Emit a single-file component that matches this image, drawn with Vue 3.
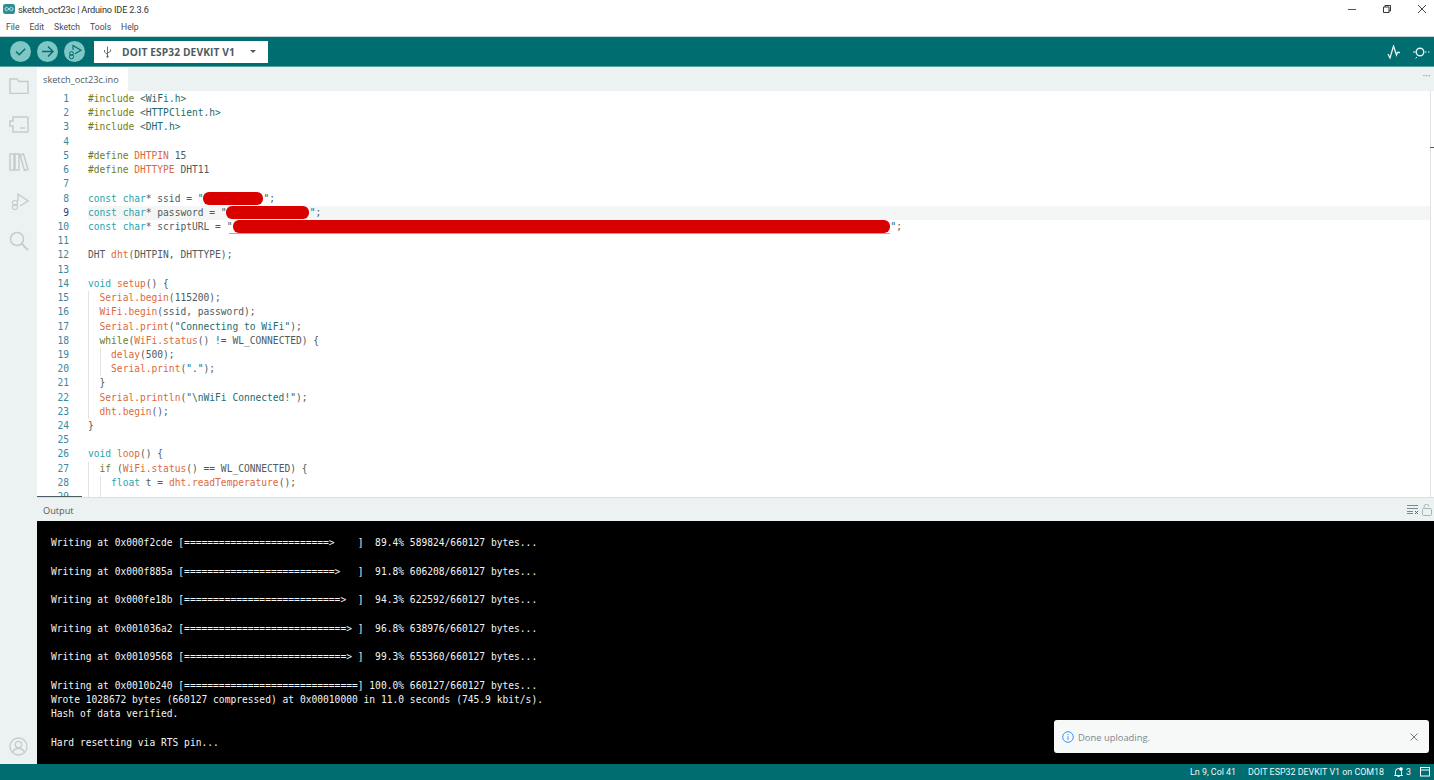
<script setup>
const k = 'kw', p = 'pp', s = 'str', f = 'fn', t = 'tx'
const code = [
  [0, [p, '#include'], [t, ' '], [s, '<WiFi.h>']],
  [0, [p, '#include'], [t, ' '], [s, '<HTTPClient.h>']],
  [0, [p, '#include'], [t, ' '], [s, '<DHT.h>']],
  [0],
  [0, [p, '#define'], [t, ' '], [f, 'DHTPIN'], [t, ' 15']],
  [0, [p, '#define'], [t, ' '], [f, 'DHTTYPE'], [t, ' DHT11']],
  [0],
  [0, [k, 'const char'], [t, '* ssid = '], [s, '"'], ['red r1', ''], [s, '"'], [t, ';']],
  [0, [k, 'const char'], [t, '* password = '], [s, '"'], ['red r2', ''], [s, '"'], [t, ';']],
  [0, [k, 'const char'], [t, '* scriptURL = '], [s, '"'], ['red r3', ''], [s, '"'], [t, ';']],
  [0],
  [0, [t, 'DHT '], [f, 'dht'], [t, '(DHTPIN, DHTTYPE);']],
  [0],
  [0, [k, 'void'], [t, ' '], [f, 'setup'], [t, '() {']],
  [1, [f, 'Serial.begin'], [t, '(115200);']],
  [1, [f, 'WiFi.begin'], [t, '(ssid, password);']],
  [1, [f, 'Serial.print'], [t, '('], [s, '"Connecting to WiFi"'], [t, ');']],
  [1, [p, 'while'], [t, '('], [f, 'WiFi.status'], [t, '() != WL_CONNECTED) {']],
  [2, [f, 'delay'], [t, '(500);']],
  [2, [f, 'Serial.print'], [t, '('], [s, '"."'], [t, ');']],
  [1, [t, '}']],
  [1, [f, 'Serial.println'], [t, '('], [s, '"\\nWiFi Connected!"'], [t, ');']],
  [1, [f, 'dht.begin'], [t, '();']],
  [0, [t, '}']],
  [0],
  [0, [k, 'void'], [t, ' '], [f, 'loop'], [t, '() {']],
  [1, [p, 'if'], [t, ' ('], [f, 'WiFi.status'], [t, '() == WL_CONNECTED) {']],
  [2, [k, 'float'], [t, ' t = '], [f, 'dht.readTemperature'], [t, '();']],
  [2],
]
const lines = code.map((row, i) => ({ no: i + 1, indent: row[0], parts: row.slice(1) }))
const output = [
  'Writing at 0x000f2cde [=========================>    ]  89.4% 589824/660127 bytes... ',
  '',
  'Writing at 0x000f885a [==========================>   ]  91.8% 606208/660127 bytes... ',
  '',
  'Writing at 0x000fe18b [===========================>  ]  94.3% 622592/660127 bytes... ',
  '',
  'Writing at 0x001036a2 [============================> ]  96.8% 638976/660127 bytes... ',
  '',
  'Writing at 0x00109568 [============================> ]  99.3% 655360/660127 bytes... ',
  '',
  'Writing at 0x0010b240 [==============================] 100.0% 660127/660127 bytes... ',
  'Wrote 1028672 bytes (660127 compressed) at 0x00010000 in 11.0 seconds (745.9 kbit/s).',
  'Hash of data verified.',
  '',
  'Hard resetting via RTS pin...',
].join('\n')
const menus = ['File', 'Edit', 'Sketch', 'Tools', 'Help']
</script>

<template>
  <div class="app">
    <header class="titlebar">
      <div class="title">
        <svg class="logo" viewBox="0 0 12 10" width="12" height="10">
          <rect width="12" height="10" rx="2.2" fill="#2f8f96" />
          <path d="M3.6 3.4a1.6 1.6 0 1 0 0 3.2c1.7 0 3-3.2 4.8-3.2a1.6 1.6 0 1 1 0 3.2c-1.8 0-3.1-3.2-4.8-3.2z" fill="none" stroke="#d9f0f0" stroke-width=".8" />
        </svg>
        <span>sketch_oct23c | Arduino IDE 2.3.6</span>
      </div>
      <div class="winctrls">
        <svg width="10" height="10" viewBox="0 0 10 10"><path d="M1 5.5h8" stroke="#555" fill="none" /></svg>
        <svg width="10" height="10" viewBox="0 0 10 10"><path d="M1.5 3h5.5v5.5h-5.500zM3 3V1.500h5.500v5.500H7" stroke="#333" fill="none" /></svg>
        <svg width="10" height="10" viewBox="0 0 10 10"><path d="M1 1l8 8M9 1l-8 8" stroke="#444" fill="none" /></svg>
      </div>
    </header>
    <nav class="menubar">
      <span v-for="m in menus" :key="m">{{ m }}</span>
    </nav>
    <div class="toolbar">
      <div class="round">
        <svg width="21" height="21" viewBox="0 0 21 21"><path d="M6 10.500l3.200 3.200 6-6" fill="none" stroke="#006d70" stroke-width="1.500" /></svg>
      </div>
      <div class="round">
        <svg width="21" height="21" viewBox="0 0 21 21"><path d="M5 10.500h10.500M11 5.500l5 5-5 5" fill="none" stroke="#006d70" stroke-width="1.400" /></svg>
      </div>
      <div class="round">
        <svg width="21" height="21" viewBox="0 0 21 21"><path d="M9 9V4.500l8 4.800-6 3.500" fill="none" stroke="#006d70" stroke-width="1.100" /><circle cx="7.500" cy="12.500" r="1.900" fill="none" stroke="#006d70" /><circle cx="7.500" cy="15.700" r="2.100" fill="none" stroke="#006d70" /></svg>
      </div>
      <div class="board">
        <svg width="9" height="12" viewBox="0 0 9 12"><path d="M4.500 0.500V11.500M4.500 8.500L1.500 6V4M4.500 7L7.500 5.500V3.500" fill="none" stroke="#50606a" stroke-width=".9" /><circle cx="4.500" cy="10.500" r="1.100" fill="#50606a" /></svg>
        <b>DOIT ESP32 DEVKIT V1</b>
        <i class="caret"></i>
      </div>
      <div class="tool-right">
        <svg width="14" height="14" viewBox="0 0 14 14"><path d="M1 9l2 4 3.500-12 3 9 1-2.500h2.500" fill="none" stroke="#e6f2f2" stroke-width="1.300" /></svg>
        <svg width="18" height="14" viewBox="0 0 18 14"><circle cx="7" cy="7" r="3.800" fill="none" stroke="#e6f2f2" stroke-width="1.400" /><path d="M0 7h2.500M12 7h1.500M15 7h1.500M4 12l-1.500 1.500" fill="none" stroke="#e6f2f2" /></svg>
      </div>
    </div>
    <div class="body">
      <aside class="sidebar">
        <div class="side-top">
          <svg width="20" height="18" viewBox="0 0 20 18"><path d="M1 3h7l2 2.500h9v12H1z" fill="none" stroke="#c4cccc" stroke-width="1.500" /></svg>
          <svg width="20" height="18" viewBox="0 0 20 18"><path d="M4 2h14a1 1 0 0 1 1 1v13a1 1 0 0 1-1 1H4V11H1V6h3z" fill="none" stroke="#c4cccc" stroke-width="1.500" /><path d="M11 13h5" stroke="#c4cccc" stroke-width="1.500" /></svg>
          <svg width="20" height="18" viewBox="0 0 20 18"><path d="M1 1h4v16H1zM6 1h4v16H6zM11 2l3.500-1 4.500 15.500-3.500 1z" fill="none" stroke="#c4cccc" stroke-width="1.500" /></svg>
          <svg width="20" height="18" viewBox="0 0 20 18"><path d="M9 9V2l10 7-8 5" fill="none" stroke="#c4cccc" stroke-width="1.400" /><circle cx="6" cy="11" r="2.500" fill="none" stroke="#c4cccc" stroke-width="1.200" /><circle cx="6" cy="15" r="2.500" fill="none" stroke="#c4cccc" stroke-width="1.200" /></svg>
          <svg width="20" height="20" viewBox="0 0 20 20"><circle cx="8" cy="8" r="6.500" fill="none" stroke="#c4cccc" stroke-width="1.500" /><path d="M13 13l6 6" stroke="#c4cccc" stroke-width="1.800" /></svg>
        </div>
        <svg class="profile" width="19" height="19" viewBox="0 0 19 19"><circle cx="9.500" cy="9.500" r="8.500" fill="none" stroke="#c4cccc" stroke-width="1.300" /><circle cx="9.500" cy="7.500" r="3.200" fill="none" stroke="#c4cccc" stroke-width="1.300" /><path d="M3.500 15.500c1-3 3-4 6-4s5 1 6 4" fill="none" stroke="#c4cccc" stroke-width="1.300" /></svg>
      </aside>
      <main class="workspace">
        <div class="tabbar">
          <div class="tab">sketch_oct23c.ino</div>
          <div class="more">···</div>
        </div>
        <section class="editor">
          <div v-for="l in lines" :key="l.no" class="line" :class="{ current: l.no === 9 }">
            <span class="no">{{ l.no }}</span>
            <span class="content">
              <span v-for="g in l.indent" :key="g" class="indent"></span><span v-for="(pt, i) in l.parts" :key="i" :class="pt[0]">{{ pt[1] }}</span>
            </span>
          </div>
          <div class="ruler"><i></i></div>
        </section>
        <div class="outhead">
          <div class="outtab">Output</div>
          <div class="outicons">
            <svg width="11" height="9" viewBox="0 0 11 9"><path d="M0 .5h11M0 3.500h11M0 6.500h6M0 8.500h6" stroke="#7a8a90" fill="none" /><path d="M8 6l3 3M11 6l-3 3" stroke="#58666c" fill="none" /></svg>
            <svg width="10" height="12" viewBox="0 0 10 12"><rect x=".5" y="4.500" width="9" height="7" rx="1" fill="none" stroke="#a9b4b8" /><path d="M2 4.500V3a2.500 2.500 0 0 1 5-.500" fill="none" stroke="#a9b4b8" /></svg>
          </div>
        </div>
        <pre class="terminal">{{ output }}</pre>
      </main>
    </div>
    <footer class="statusbar">
      <span>Ln 9, Col 41</span>
      <span class="st-board">DOIT ESP32 DEVKIT V1 on COM18</span>
      <span class="bell">
        <svg width="9" height="10" viewBox="0 0 9 10"><path d="M1.500 7.500V4.500a3 3 0 0 1 6 0v3l1 1H.5zM3.500 9.500h2" fill="none" stroke="#fff" /><circle cx="7" cy="2" r="1.800" fill="#fff" /></svg>
        3
      </span>
      <svg class="panel" width="10" height="10" viewBox="0 0 10 10"><rect x=".5" y=".5" width="9" height="8.500" fill="none" stroke="#fff" /><path d="M.5 3h9" stroke="#fff" /></svg>
    </footer>
    <div class="toast">
      <svg width="12" height="12" viewBox="0 0 12 12"><circle cx="6" cy="6" r="5.300" fill="none" stroke="#3794ff" /><path d="M6 5.200v3.600M6 3v1.200" stroke="#3794ff" /></svg>
      <span class="toast-text">Done uploading.</span>
      <svg class="close" width="8" height="8" viewBox="0 0 8 8"><path d="M.5.500l7 7M7.500.500l-7 7" stroke="#6e7b80" fill="none" /></svg>
    </div>
  </div>
</template>

<style>
html, body { margin: 0; background: #fff; }
</style>

<style scoped>
.app {
  position: relative;
  width: 1434px;
  height: 780px;
  display: flex;
  flex-direction: column;
  overflow: hidden;
  background: #fff;
  font-family: Roboto, "Open Sans", sans-serif;
}
.titlebar {
  height: 18px;
  display: flex;
  align-items: center;
  justify-content: space-between;
}
.title {
  display: flex;
  align-items: center;
  gap: 3px;
  padding-left: 3px;
  font-size: 9.200px;
  letter-spacing: -.18px;
  color: #333;
}
.winctrls {
  display: flex;
  gap: 25px;
  padding-right: 7px;
}
.menubar {
  height: 18px;
  display: flex;
  align-items: center;
  gap: 10px;
  padding-left: 6px;
  font-size: 8.600px;
  color: #4a4a4a;
}
.toolbar {
  display: flex;
  align-items: center;
  gap: 6px;
  padding-left: 10px;
  background: #006d70;
  border-top: 1px solid #c3d8d8;
  border-bottom: 1px solid #5a9fa2;
  box-sizing: border-box;
  height: 31px;
}
.round {
  width: 21px;
  height: 21px;
  border-radius: 50%;
  background: #7fc7c5;
  display: flex;
}
.board {
  width: 174px;
  height: 22px;
  margin-left: 3px;
  box-sizing: border-box;
  padding-left: 9px;
  background: #fff;
  display: flex;
  align-items: center;
  gap: 10px;
  font-family: "Open Sans", sans-serif;
  font-size: 10.200px;
  color: #4e5b61;
}
.board b {
  font-weight: 700;
  letter-spacing: .12px;
}
.caret {
  margin-left: 5px;
  border-left: 3.500px solid transparent;
  border-right: 3.500px solid transparent;
  border-top: 3.500px solid #4e5b61;
}
.tool-right {
  margin-left: auto;
  display: flex;
  align-items: center;
  gap: 12px;
  padding-right: 3px;
}
.body {
  flex: 1;
  min-height: 0;
  display: flex;
}
.sidebar {
  width: 37px;
  flex: none;
  background: #ecf1f1;
  display: flex;
  flex-direction: column;
  align-items: center;
  justify-content: space-between;
  padding: 9px 0 8px;
  box-sizing: border-box;
}
.side-top {
  display: flex;
  flex-direction: column;
  align-items: center;
  gap: 20.700px;
}
.workspace {
  flex: 1;
  min-width: 0;
  display: flex;
  flex-direction: column;
}
.tabbar {
  height: 24px;
  flex: none;
  display: flex;
  align-items: stretch;
  justify-content: space-between;
  background: #ecf1f1;
}
.tab {
  width: 91px;
  padding-left: 6px;
  box-sizing: border-box;
  background: #fff;
  font-family: "Open Sans", sans-serif;
  font-size: 9.200px;
  line-height: 25px;
  color: #4e5b61;
}
.more {
  padding-right: 3px;
  font-size: 11px;
  line-height: 20px;
  color: #7a8a90;
}
.editor {
  position: relative;
  height: 407px;
  flex: none;
  overflow: hidden;
  box-sizing: border-box;
  padding-top: 1px;
  border-bottom: 1px solid #dae0e0;
  font-family: "DejaVu Sans Mono", monospace;
  font-size: 9.600px;
}
.line {
  height: 14.220px;
  line-height: 14.220px;
  display: flex;
  white-space: pre;
}
.no {
  width: 32px;
  flex: none;
  text-align: right;
  color: #3a87a0;
}
.current .no {
  color: #1b3a6f;
}
.content {
  flex: 1;
  margin-left: 19px;
  color: #505b60;
}
.current .content {
  background: #f4f5f5;
  margin-right: 4px;
}
.indent {
  display: inline-block;
  width: 11.560px;
  height: 14.220px;
  vertical-align: top;
  box-shadow: inset 1px 0 #e3e3e3;
}
.kw { color: #2aa5aa; }
.pp { color: #6f7d20; }
.str { color: #1d6b6e; }
.fn { color: #dc6a3c; }
.tx { color: #505b60; }
.red {
  display: inline-block;
  position: relative;
  height: 13px;
  border-radius: 6px;
  background: #d90000;
  vertical-align: -3px;
}
.r1 {
  width: 60px;
  margin: 0 1px 0 -1px;
}
.r2 {
  width: 83px;
  margin: 0 1px 0 -1px;
}
.r3 {
  width: 657px;
  margin-left: 1px;
}
.r3::after {
  content: "";
  position: absolute;
  left: -4px;
  right: 0;
  bottom: -1px;
  height: 1px;
  background: #8fb5b8;
}
.ruler {
  position: absolute;
  top: 0;
  bottom: 0;
  right: 3px;
  width: 1px;
  background: #e2e2e2;
}
.ruler i {
  position: absolute;
  top: 56px;
  left: 0;
  width: 4px;
  height: 1px;
  background: #555;
}
.outhead {
  height: 23px;
  flex: none;
  display: flex;
  align-items: center;
  justify-content: space-between;
  background: #ecf1f1;
}
.outtab {
  position: relative;
  padding: 1px 0 0 6px;
  font-family: "Open Sans", sans-serif;
  font-size: 9.200px;
  color: #4e5b61;
}
.outtab::before {
  content: "";
  position: absolute;
  left: 0;
  top: -7px;
  width: 45px;
  height: 1px;
  background: #4e5b61;
}
.outicons {
  display: flex;
  align-items: center;
  gap: 4px;
  padding-right: 2px;
}
.terminal {
  flex: 1;
  min-height: 0;
  margin: 0;
  padding: 15px 0 0 14px;
  box-sizing: border-box;
  background: #000;
  color: #f2f5f6;
  font-family: "DejaVu Sans Mono", monospace;
  font-size: 9.600px;
  letter-spacing: .012px;
  line-height: 14.250px;
  overflow: hidden;
}
.statusbar {
  height: 16px;
  flex: none;
  display: flex;
  align-items: center;
  justify-content: flex-end;
  padding-right: 4px;
  background: #006d70;
  color: #f0f6f6;
  font-size: 8.900px;
}
.st-board {
  margin-left: 12px;
}
.bell {
  display: flex;
  align-items: center;
  gap: 3px;
  margin-left: 10px;
}
.panel {
  margin-left: 9px;
}
.toast {
  position: absolute;
  left: 1054px;
  top: 720px;
  width: 375px;
  height: 33px;
  box-sizing: border-box;
  padding: 0 11px 0 8px;
  display: flex;
  align-items: center;
  gap: 4px;
  background: #f7f9f9;
  border-radius: 3px;
  font-family: "Open Sans", sans-serif;
  font-size: 9.400px;
  color: #7a878c;
}
.toast-text {
  padding-top: 1px;
}
.close {
  margin-left: auto;
}
</style>
